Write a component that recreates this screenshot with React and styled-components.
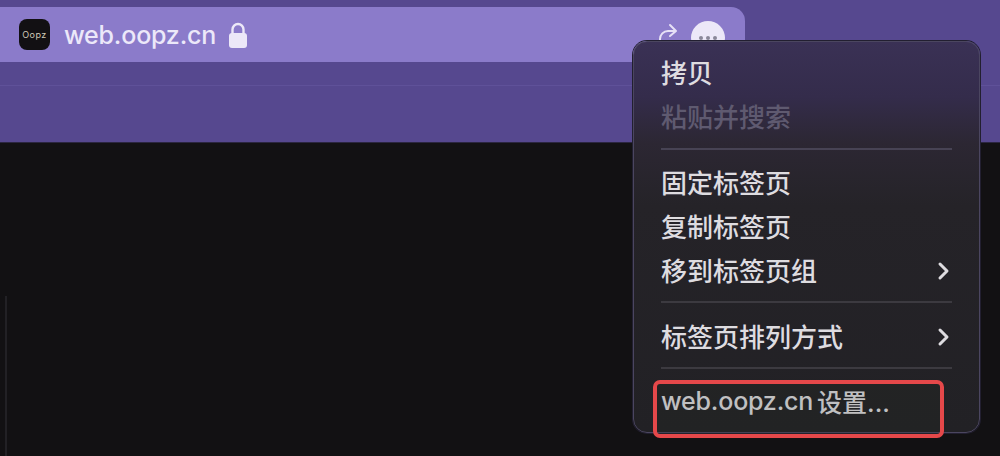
import React from "react";
import styled, { createGlobalStyle } from "styled-components";

const Global = createGlobalStyle`
  html, body { margin: 0; padding: 0; background: #121113; }
  body { font-family: "Inter", "Noto Sans CJK SC", sans-serif; }
`;

const Page = styled.div`
  position: relative;
  width: 1000px;
  height: 456px;
  overflow: hidden;
  background: #121113;
`;

const Header = styled.header`
  height: 143px;
  box-sizing: border-box;
  padding-top: 7px;
  background: #56488f;
  border-bottom: 1px solid #2b2640;
`;

const AddressBar = styled.div`
  width: 745px;
  height: 55px;
  box-sizing: border-box;
  padding: 0 20px 0 19px;
  display: flex;
  align-items: center;
  background: #8b7bca;
  border-radius: 0 14px 0 0;
`;

const SiteIcon = styled.div`
  width: 31px;
  height: 31px;
  border-radius: 8px;
  background: #121013;
  color: #cfc9b8;
  font-size: 9px;
  letter-spacing: 0.5px;
  display: flex;
  align-items: center;
  justify-content: center;
`;

const Url = styled.span`
  margin-left: 14px;
  font-size: 25px;
  font-weight: 500;
  letter-spacing: -0.2px;
  line-height: 32px;
  color: #ece8f9;
`;

const LockIcon = styled.svg`
  margin-left: 12px;
  width: 20px;
  height: 28px;
`;

const BarActions = styled.div`
  margin-left: auto;
  display: flex;
  align-items: center;
  gap: 11px;
`;

const MoreButton = styled.div`
  width: 34px;
  height: 34px;
  border-radius: 50%;
  background: #ece8f8;
  display: flex;
  align-items: center;
  justify-content: center;
  gap: 3px;
  transform: translateY(3px);
`;

const Dot = styled.i`
  width: 4px;
  height: 4px;
  border-radius: 50%;
  background: #8a8799;
`;

const TabStrip = styled.div`
  margin-top: 23px;
  height: 1px;
  background: #5f5199;
`;

const Rail = styled.div`
  position: absolute;
  left: 5px;
  top: 296px;
  bottom: 0;
  width: 2px;
  background: #222125;
`;

const Menu = styled.nav`
  position: absolute;
  left: 633px;
  top: 41px;
  width: 347px;
  height: 392px;
  box-sizing: border-box;
  padding: 7px 27px 0;
  border-radius: 14px;
  border: 1px solid #4b4660;
  box-shadow: 0 0 0 1px #221f30;
  background: linear-gradient(180deg, #3a3155 0%, #342c4b 14%, #2c2733 26%, #252328 42%, #222125 100%);
`;

const Row = styled.div`
  height: 44px;
  display: flex;
  align-items: center;
  justify-content: space-between;
  font-size: 26px;
  font-weight: 500;
  color: ${(p) => (p.$muted ? "#5f5a70" : "#dedce0")};
`;

const SiteLabel = styled.span`
  font-size: 25px;
  letter-spacing: -0.2px;
`;

const SettingsLabel = styled.span`
  margin-left: 4px;
  font-size: 25px;
  margin-right: auto;
`;

const Chevron = styled.svg`
  width: 13px;
  height: 20px;
  margin: 4px 2px 0 0;
`;

const Divider = styled.div`
  height: 2px;
  margin: ${(p) => (p.$tint ? "11px 0 9px" : "10px 0")};
  background: ${(p) => p.$tint || "#3c3a40"};
`;

const Highlight = styled.div`
  position: absolute;
  left: 653px;
  top: 380px;
  width: 291px;
  height: 58px;
  box-sizing: border-box;
  border: 4px solid #e5484a;
  border-radius: 7px;
  background: rgba(40, 50, 30, 0.16);
`;

function Arrow() {
  return (
    <Chevron viewBox="0 0 13 20" fill="none" stroke="#dedce0" strokeWidth="3" strokeLinecap="round" strokeLinejoin="round">
      <path d="M3 3l7 7-7 7" />
    </Chevron>
  );
}

export default function App() {
  return (
    <Page>
      <Global />
      <Header>
        <AddressBar>
          <SiteIcon>Oopz</SiteIcon>
          <Url>web.oopz.cn</Url>
          <LockIcon viewBox="0 0 20 28">
            <path d="M4.5 13V8.5a5.5 5.5 0 0 1 11 0V13" fill="none" stroke="#ece8f8" strokeWidth="2.4" />
            <rect x="1" y="12" width="18" height="15" rx="3" fill="#ece8f8" />
          </LockIcon>
          <BarActions>
            <svg width="24" height="28" viewBox="0 0 24 28" fill="none" stroke="#e6e1f6" strokeWidth="2" strokeLinecap="round" strokeLinejoin="round">
              <path d="M4 24v-6a8 8 0 0 1 8-8h7" />
              <path d="M14 4l6 6-6 5" />
            </svg>
            <MoreButton>
              <Dot />
              <Dot />
              <Dot />
            </MoreButton>
          </BarActions>
        </AddressBar>
        <TabStrip />
      </Header>
      <Rail />
      <Menu>
        <Row>拷贝</Row>
        <Row $muted>粘贴并搜索</Row>
        <Divider $tint="#474354" />
        <Row>固定标签页</Row>
        <Row>复制标签页</Row>
        <Row>
          移到标签页组
          <Arrow />
        </Row>
        <Divider />
        <Row>
          标签页排列方式
          <Arrow />
        </Row>
        <Divider />
        <Row>
          <SiteLabel>web.oopz.cn</SiteLabel>
          <SettingsLabel>设置...</SettingsLabel>
        </Row>
      </Menu>
      <Highlight />
    </Page>
  );
}
